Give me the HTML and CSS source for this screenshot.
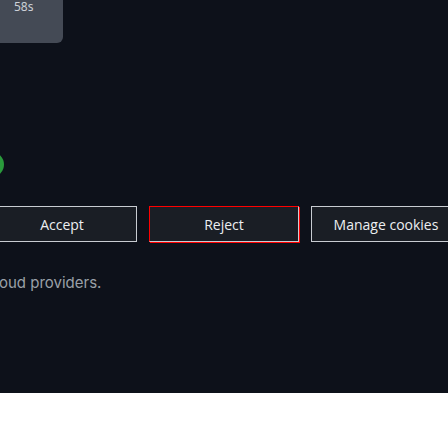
FILE: index.html
```html
<!DOCTYPE html>
<html>
<head>
<meta charset="utf-8">
<link rel="stylesheet" href="styles.css">
</head>
<body>
<div class="page">
  <div class="timer">58s</div>
  <div class="status"></div>
  <div class="actions">
    <button class="btn">Accept</button>
    <button class="btn btn-focus">Reject</button>
    <button class="btn">Manage cookies</button>
  </div>
  <p class="note">Your data may be shared with cloud providers.</p>
</div>
</body>
</html>
```
FILE: styles.css
```css
html, body {
  margin: 0;
  padding: 0;
  background: #ffffff;
  overflow: hidden;
}
.page {
  height: 393px;
  background: #0d111a;
  overflow: hidden;
  font-family: "Noto Sans", "Open Sans", sans-serif;
}
.timer {
  width: 49px;
  height: 43px;
  padding-left: 14px;
  background: #444a55;
  border-bottom-right-radius: 6px;
  color: #cdd1d7;
  font-family: "Noto Sans", sans-serif;
  font-size: 12px;
  font-weight: 400;
  line-height: 14px;
  margin-top: 0;
  box-sizing: content-box;
}
.status {
  width: 24px;
  height: 25px;
  margin-left: -20px;
  margin-top: 109px;
  border-radius: 50%;
  background: #2a9a3c;
}
.actions {
  display: flex;
  gap: 12px;
  margin-top: 29px;
  margin-left: -13px;
}
.btn {
  flex: 0 0 auto;
  width: 150px;
  height: 36px;
  box-sizing: border-box;
  background: #1a1e25;
  border: 1px solid #c8ccd2;
  color: #eceef1;
  font-family: "Open Sans", "Noto Sans", sans-serif;
  font-size: 14px;
  font-weight: 400;
  padding: 0;
  margin: 0;
}
.btn-focus {
  border-left-color: #ff0000;
  border-top-color: #ff0000;
  box-shadow: 1px 1px 0 #ff0000;
}
.note {
  margin: 32px 0 0 -228px;
  white-space: nowrap;
  color: #9aa0a8;
  font-family: "Inter", "Noto Sans", sans-serif;
  font-size: 15px;
  line-height: 18px;
}
```
